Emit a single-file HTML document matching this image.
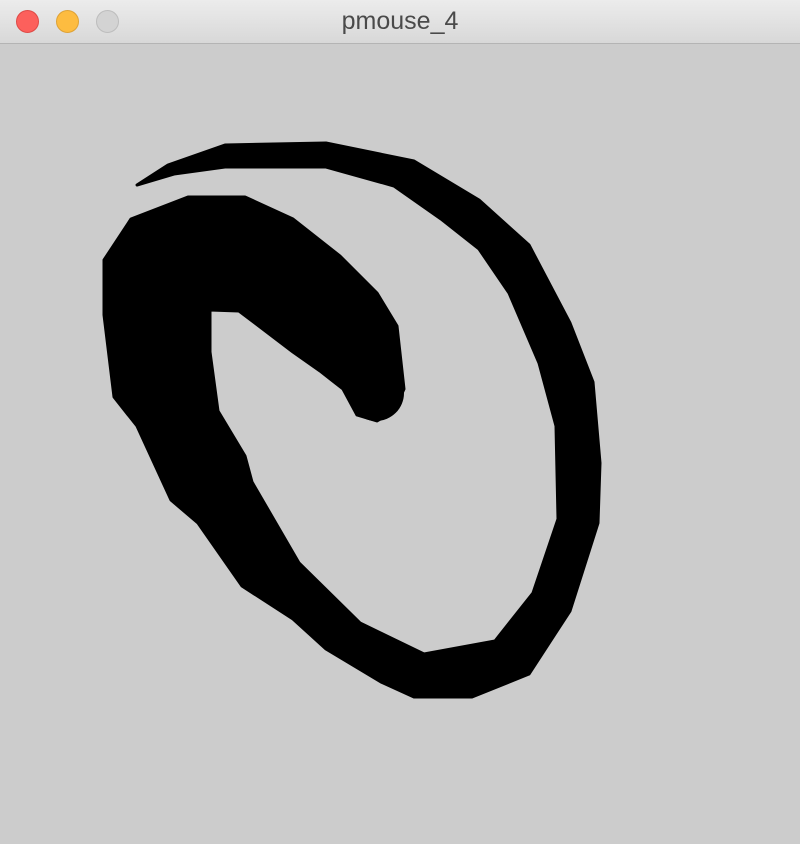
<!DOCTYPE html>
<html><head><style>
html,body{margin:0;padding:0;width:800px;height:844px;overflow:hidden;background:#cccccc;font-family:"Liberation Sans",sans-serif}
.bar{position:absolute;left:0;top:0;width:800px;height:43px;background:linear-gradient(#ececec,#d8d8d8);border-bottom:1px solid #b4b4b4}
.b{position:absolute;top:10px;width:23px;height:23px;border-radius:50%;box-sizing:border-box}
.t{position:absolute;left:0;width:800px;top:7px;text-align:center;font-size:25px;color:#4a4a4a}
</style></head><body>
<div class="bar">
<div class="b" style="left:16px;background:#fc605c;border:1px solid #de4a46"></div>
<div class="b" style="left:56px;background:#fdbc40;border:1px solid #dea236"></div>
<div class="b" style="left:96px;background:#d3d3d3;border:1px solid #bdbdbd"></div>
<div class="t">pmouse_4</div>
</div>
<svg style="position:absolute;left:0;top:0" width="800" height="844">
<path fill="#000" stroke="#000" stroke-width="3" stroke-linejoin="round" d="M137,185 L168,165 L225,145 L326,143 L414,161 L479,200 L529,245 L570,323 L593,382 L600,463 L598,523 L570,611 L529,674 L472,697 L414,697 L381,682 L326,649 L293,619 L242,586 L198,523 L171,500 L137,426 L114,397 L104,315 L104,260 L131,219 L188,197 L245,197 L293,219 L340,256 L377,293 L397,326 L404,389 L394,411 L377,421 L357,415 L343,389 L320,371 L293,352 L239,311 L210,310 L210,352 L218,411 L245,456 L252,482 L299,563 L360,623 L424,654 L495,641 L533,593 L558,519 L556,426 L539,363 L509,293 L479,249 L441,219 L394,186 L326,167 L272,167 L225,167 L174,174 Z"/>
<circle cx="376" cy="393" r="28" fill="#000"/>
</svg>
</body></html>
